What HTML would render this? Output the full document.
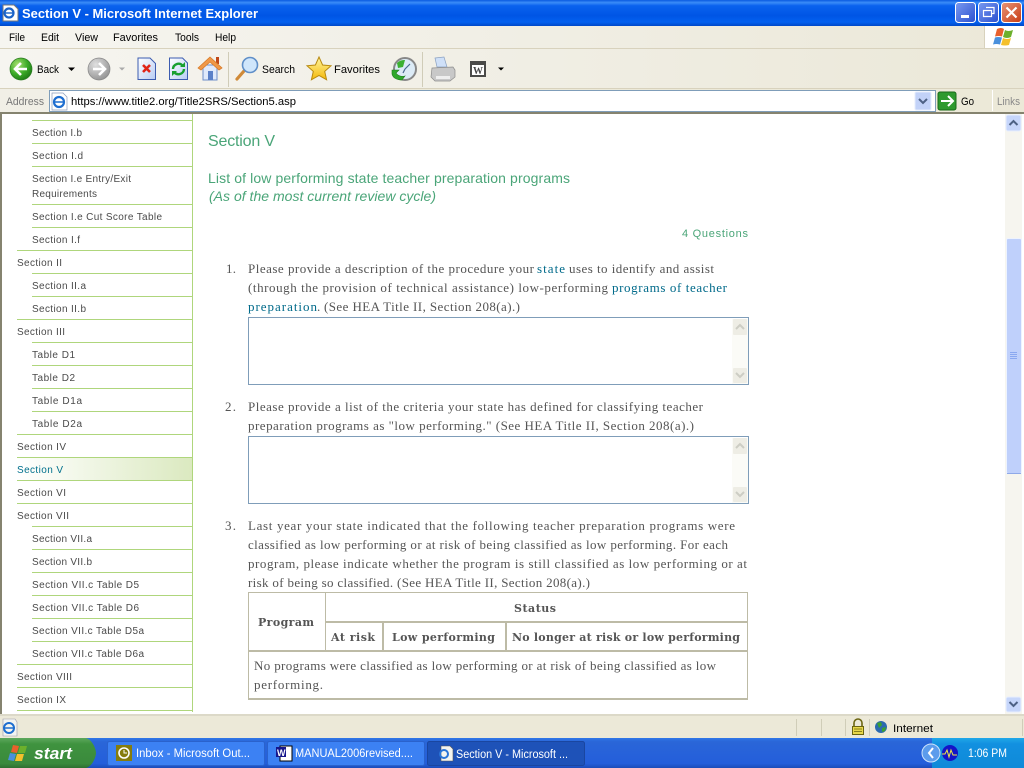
<!DOCTYPE html>
<html><head><meta charset="utf-8"><title>Section V - Microsoft Internet Explorer</title>
<style>
html,body{margin:0;padding:0;width:1024px;height:768px;overflow:hidden;background:#fff}
svg{position:absolute;left:0;top:0;display:block}
text{white-space:pre}
.c{font:11px "Liberation Sans",sans-serif;fill:#000}
.n{font:10px "Liberation Sans",sans-serif;fill:#4a4a4a}
.s{font:13px "Liberation Serif",serif;fill:#555}
.b{font:bold 11px "DejaVu Serif",serif;fill:#555}
.g{font-family:"Liberation Sans",sans-serif;fill:#4aa578}
.w{font:11.5px "Liberation Sans",sans-serif;fill:#fff}
</style></head><body>
<svg width="1024" height="768" viewBox="0 0 1024 768" xmlns="http://www.w3.org/2000/svg">
<defs>
<linearGradient id="tb" x1="0" y1="0" x2="0" y2="1"><stop offset="0" stop-color="#0a5be0"/><stop offset=".1" stop-color="#3a8cf8"/><stop offset=".22" stop-color="#0a62ee"/><stop offset=".6" stop-color="#0055e5"/><stop offset=".85" stop-color="#0360ef"/><stop offset="1" stop-color="#0048c8"/></linearGradient>
<linearGradient id="mb" x1="0" y1="0" x2="1" y2="0"><stop offset="0" stop-color="#f6f5f0"/><stop offset=".45" stop-color="#f1efe6"/><stop offset="1" stop-color="#ebe8d8"/></linearGradient>
<linearGradient id="tk" x1="0" y1="0" x2="0" y2="1"><stop offset="0" stop-color="#2f78e8"/><stop offset=".12" stop-color="#2a66d8"/><stop offset=".85" stop-color="#245edb"/><stop offset="1" stop-color="#1c4cb8"/></linearGradient>
<linearGradient id="st" x1="0" y1="0" x2="0" y2="1"><stop offset="0" stop-color="#5ea85e"/><stop offset=".2" stop-color="#3f933f"/><stop offset=".85" stop-color="#3a8a3c"/><stop offset="1" stop-color="#2e6f30"/></linearGradient>
<linearGradient id="tr" x1="0" y1="0" x2="0" y2="1"><stop offset="0" stop-color="#20a8e8"/><stop offset=".2" stop-color="#1290e0"/><stop offset="1" stop-color="#0f8ad8"/></linearGradient>
<linearGradient id="sel" x1="0" y1="0" x2="1" y2="0"><stop offset="0" stop-color="#fff"/><stop offset="1" stop-color="#dbe9c0"/></linearGradient>
<linearGradient id="bt" x1="0" y1="0" x2="1" y2="1"><stop offset="0" stop-color="#7a9af0"/><stop offset="1" stop-color="#2a50d0"/></linearGradient>
<linearGradient id="rd" x1="0" y1="0" x2="1" y2="1"><stop offset="0" stop-color="#e89478"/><stop offset="1" stop-color="#c83c14"/></linearGradient>
<radialGradient id="gr" cx=".35" cy=".3" r=".8"><stop offset="0" stop-color="#a8e070"/><stop offset=".55" stop-color="#3cab28"/><stop offset="1" stop-color="#1a7414"/></radialGradient>
<radialGradient id="gy" cx=".35" cy=".3" r=".8"><stop offset="0" stop-color="#e0e0e0"/><stop offset="1" stop-color="#8e8e8e"/></radialGradient>
<linearGradient id="pg" x1="0" y1="0" x2="1" y2="1"><stop offset="0" stop-color="#fff"/><stop offset="1" stop-color="#b8ccf4"/></linearGradient>
<linearGradient id="star" x1="0" y1="0" x2="0" y2="1"><stop offset="0" stop-color="#fff6a0"/><stop offset="1" stop-color="#f4b808"/></linearGradient>
</defs>

<!-- window chrome -->
<rect width="1024" height="26" fill="url(#tb)"/>
<rect y="26" width="1024" height="23" fill="url(#mb)"/>
<rect x="985" y="26" width="39" height="23" fill="#fff"/>
<rect x="984" y="26" width="1" height="23" fill="#d8d2bd"/>
<rect y="48" width="1024" height="1" fill="#d8d2bd"/>
<rect y="49" width="1024" height="39" fill="url(#mb)"/>
<rect y="88" width="1024" height="1" fill="#d8d2bd"/>
<rect y="89" width="1024" height="23" fill="#ece9d8"/>
<rect y="89" width="230" height="23" fill="#f1efe6"/>
<rect x="49.500" y="90.500" width="886" height="21" fill="#fff" stroke="#7f9db9"/>
<rect y="112" width="1024" height="2" fill="#85836f"/>
<rect y="114" width="1024" height="600" fill="#fff"/>
<rect x="0" y="114" width="2" height="600" fill="#85836f"/>
<rect y="714" width="1024" height="2" fill="#dcd9c8"/>
<rect y="716" width="1024" height="22" fill="#ece9d8"/>
<rect y="738" width="1024" height="30" fill="url(#tk)"/>

<!-- title bar -->
<path d="M3 5h11l4 4v12H3z" fill="#fff" stroke="#777"/>
<circle cx="9" cy="13" r="4.500" fill="none" stroke="#1b63c8" stroke-width="2.200"/>
<path d="M4 13h10" stroke="#1b63c8" stroke-width="1.400"/>
<text x="22" y="18" textLength="236" lengthAdjust="spacingAndGlyphs" style="font:bold 13px 'Liberation Sans',sans-serif;fill:#fff">Section V - Microsoft Internet Explorer</text>
<rect x="955.500" y="2.500" width="20" height="20" rx="3" fill="url(#bt)" stroke="#fff"/>
<rect x="961" y="15" width="8" height="3" fill="#fff"/>
<rect x="978.500" y="2.500" width="20" height="20" rx="3" fill="url(#bt)" stroke="#fff"/>
<path d="M986 7.500h8v6h-2M983.500 10.500h8v6h-8z" fill="none" stroke="#fff" stroke-width="1.200"/>
<rect x="1001.500" y="2.500" width="20" height="20" rx="3" fill="url(#rd)" stroke="#fff"/>
<path d="M1006.500 7.500l10 10M1016.500 7.500l-10 10" stroke="#fff" stroke-width="2.200"/>

<!-- menu -->
<text class="c" x="9" y="41" textLength="16" lengthAdjust="spacingAndGlyphs">File</text>
<text class="c" x="41" y="41" textLength="18" lengthAdjust="spacingAndGlyphs">Edit</text>
<text class="c" x="75" y="41" textLength="23" lengthAdjust="spacingAndGlyphs">View</text>
<text class="c" x="113" y="41" textLength="45" lengthAdjust="spacingAndGlyphs">Favorites</text>
<text class="c" x="175" y="41" textLength="24" lengthAdjust="spacingAndGlyphs">Tools</text>
<text class="c" x="215" y="41" textLength="21" lengthAdjust="spacingAndGlyphs">Help</text>
<!-- windows flag -->
<path d="M997 29q4-2 7 0l-2 7.500q-3-1-7 0z" fill="#e8602c"/>
<path d="M1005 30q3 2 8 0l-2 7q-4 2-8 0z" fill="#6cb02c"/>
<path d="M995 37.500q3-1 7 0l-2 7q-4-1-7 0z" fill="#4a90dc"/>
<path d="M1003 38q4 2 8 0l-2 7q-4 1-8 0z" fill="#f4c02c"/>

<!-- toolbar -->
<circle cx="21" cy="69" r="11" fill="url(#gr)" stroke="#2a7a20" stroke-width=".7"/>
<path d="M27 69H16M21 63l-6 6 6 6" fill="none" stroke="#fff" stroke-width="2.600"/>
<text class="c" x="37" y="73" textLength="22" lengthAdjust="spacingAndGlyphs">Back</text>
<path d="M68 67.500h7l-3.500 3.500z" fill="#000"/>
<circle cx="99" cy="69" r="11" fill="url(#gy)" stroke="#888" stroke-width=".7"/>
<path d="M93 69h11M99 63l6 6-6 6" fill="none" stroke="#fff" stroke-width="2.600"/>
<path d="M119 67.500h6l-3 3z" fill="#aaa"/>
<path d="M138 58h12l5.500 5.500V79.500H138z" fill="url(#pg)" stroke="#3c5cb0"/>
<path d="M143 65l7 7M150 65l-7 7" stroke="#e02418" stroke-width="2.600"/>
<path d="M169.500 58h13l5 5V79.500h-18z" fill="url(#pg)" stroke="#3c5cb0"/>
<path d="M173 69a5.500 5.500 0 0 1 9.500-3.500M184 69a5.500 5.500 0 0 1-9.500 3.500" fill="none" stroke="#18a030" stroke-width="2.400"/>
<path d="M180 67h5v-5zM177 71h-5v5z" fill="#18a030"/>
<rect x="203" y="65" width="14" height="15" fill="#dfe9fb" stroke="#6e8ec8"/>
<rect x="208" y="71" width="5" height="9" fill="#5a80c8"/>
<rect x="216" y="57" width="3" height="7" fill="#c04818"/>
<path d="M198 68l12-11 12 11-3 2-9-8-9 8z" fill="#f09848" stroke="#d87a28" stroke-width=".8"/>
<rect x="228" y="52" width="1" height="35" fill="#d0ccb8"/>
<path d="M237 79l7-8" stroke="#d08a38" stroke-width="3.200" stroke-linecap="round"/>
<circle cx="250" cy="65" r="7.500" fill="#cfe6fb" stroke="#5f8fc8" stroke-width="1.600"/>
<text class="c" x="262" y="73" textLength="33" lengthAdjust="spacingAndGlyphs">Search</text>
<path d="M319 57l3.600 8 8.400.8-6.300 5.600 1.900 8.400-7.600-4.400-7.600 4.400 1.900-8.400-6.300-5.600 8.400-.8z" fill="url(#star)" stroke="#b88a10"/>
<text class="c" x="334" y="73" textLength="46" lengthAdjust="spacingAndGlyphs">Favorites</text>
<circle cx="405" cy="69" r="11" fill="#dcebf6" stroke="#888" stroke-width="2"/>
<path d="M405 69l5-5M405 69l-2 4" stroke="#4a6a90" stroke-width="1.200"/>
<path d="M392 70h7l-3 3c2 3 6 4 9 3l-3 4c-5 0-9-2-10-6z" fill="#2ea82a" stroke="#1c7c1c" stroke-width=".6"/>
<path d="M397 63a10 10 0 0 1 8-3l-2 7-5 1z" fill="#3cb030"/>
<rect x="422" y="52" width="1" height="35" fill="#d0ccb8"/>
<path d="M435 58l9-1 3 10h-10z" fill="#cfe0f8" stroke="#8aa0c0" stroke-width=".7"/>
<path d="M432 68l21-1 2 3v7l-5 4h-15l-4-4z" fill="#c8c8c8" stroke="#8c8c8c" stroke-width=".7"/>
<rect x="436" y="76" width="14" height="3" fill="#eee"/>
<rect x="470" y="61" width="16" height="16" fill="#4a4a48"/>
<rect x="472" y="65" width="12" height="10" fill="#fff"/>
<text x="473" y="74" textLength="10" style="font:bold 10px 'Liberation Serif',serif;fill:#444">W</text>
<path d="M498 67.500h6l-3 3z" fill="#000"/>

<!-- address bar -->
<text class="c" x="6" y="105" textLength="38" lengthAdjust="spacingAndGlyphs" style="fill:#777">Address</text>
<path d="M52 93h11l4 4v13H52z" fill="#fff" stroke="#8a9ab8" stroke-width=".7"/>
<circle cx="59" cy="102" r="5" fill="none" stroke="#1e6ed0" stroke-width="2.200"/>
<path d="M54 102h10" stroke="#1e6ed0" stroke-width="1.500"/>
<text class="c" x="71" y="105" textLength="225" lengthAdjust="spacingAndGlyphs">https://www.title2.org/Title2SRS/Section5.asp</text>
<rect x="915" y="92" width="16" height="18" rx="1.500" fill="#c2d2f8" stroke="#e4ecfc"/>
<path d="M919 99l4 4 4-4" fill="none" stroke="#4d6185" stroke-width="2"/>
<rect x="938" y="92" width="18" height="18" rx="2" fill="#2e9a2e" stroke="#1a6a1a"/>
<path d="M941 101h11M948 96l5 5-5 5" fill="none" stroke="#fff" stroke-width="2"/>
<text class="c" x="961" y="105" textLength="13" lengthAdjust="spacingAndGlyphs">Go</text>
<rect x="992" y="90" width="1" height="21" fill="#fff"/>
<text class="c" x="997" y="105" textLength="23" lengthAdjust="spacingAndGlyphs" style="fill:#888">Links</text>

<!-- sidebar lines -->
<g fill="#afd67c">
<rect x="32" y="120" width="160" height="1"/><rect x="32" y="143" width="160" height="1"/><rect x="32" y="166" width="160" height="1"/><rect x="32" y="204" width="160" height="1"/><rect x="32" y="227" width="160" height="1"/>
<rect x="17" y="250" width="175" height="1"/><rect x="32" y="273" width="160" height="1"/><rect x="32" y="296" width="160" height="1"/><rect x="17" y="319" width="175" height="1"/><rect x="32" y="342" width="160" height="1"/><rect x="32" y="365" width="160" height="1"/><rect x="32" y="388" width="160" height="1"/><rect x="32" y="411" width="160" height="1"/>
<rect x="17" y="434" width="175" height="1"/><rect x="17" y="457" width="175" height="1"/>
</g>
<rect x="17" y="458" width="175" height="22" fill="url(#sel)"/>
<g fill="#afd67c">
<rect x="17" y="480" width="175" height="1"/><rect x="17" y="503" width="175" height="1"/><rect x="32" y="526" width="160" height="1"/><rect x="32" y="549" width="160" height="1"/><rect x="32" y="572" width="160" height="1"/><rect x="32" y="595" width="160" height="1"/><rect x="32" y="618" width="160" height="1"/><rect x="32" y="641" width="160" height="1"/><rect x="17" y="664" width="175" height="1"/><rect x="17" y="687" width="175" height="1"/><rect x="17" y="710" width="175" height="1"/>
<rect x="192" y="114" width="1" height="598"/>
</g>

<!-- sidebar text -->
<text class="n" x="32" y="136" textLength="50">Section I.b</text>
<text class="n" x="32" y="159" textLength="51">Section I.d</text>
<text class="n" x="32" y="182" textLength="99">Section I.e Entry/Exit</text>
<text class="n" x="32" y="197" textLength="65">Requirements</text>
<text class="n" x="32" y="220" textLength="130">Section I.e Cut Score Table</text>
<text class="n" x="32" y="243" textLength="48">Section I.f</text>
<text class="n" x="17" y="266" textLength="45">Section II</text>
<text class="n" x="32" y="289" textLength="54">Section II.a</text>
<text class="n" x="32" y="312" textLength="54">Section II.b</text>
<text class="n" x="17" y="335" textLength="48">Section III</text>
<text class="n" x="32" y="358" textLength="43">Table D1</text>
<text class="n" x="32" y="381" textLength="43">Table D2</text>
<text class="n" x="32" y="404" textLength="50">Table D1a</text>
<text class="n" x="32" y="427" textLength="50">Table D2a</text>
<text class="n" x="17" y="450" textLength="49">Section IV</text>
<text class="n" x="17" y="473" textLength="46" style="fill:#00708c">Section V</text>
<text class="n" x="17" y="496" textLength="49">Section VI</text>
<text class="n" x="17" y="519" textLength="52">Section VII</text>
<text class="n" x="32" y="542" textLength="60">Section VII.a</text>
<text class="n" x="32" y="565" textLength="60">Section VII.b</text>
<text class="n" x="32" y="588" textLength="107">Section VII.c Table D5</text>
<text class="n" x="32" y="611" textLength="107">Section VII.c Table D6</text>
<text class="n" x="32" y="634" textLength="112">Section VII.c Table D5a</text>
<text class="n" x="32" y="657" textLength="112">Section VII.c Table D6a</text>
<text class="n" x="17" y="680" textLength="55">Section VIII</text>
<text class="n" x="17" y="703" textLength="49">Section IX</text>

<!-- main headings -->
<text class="g" x="208" y="146" textLength="67" style="font-size:16px">Section V</text>
<text class="g" x="208" y="183" textLength="362" style="font-size:14px">List of low performing state teacher preparation programs</text>
<text class="g" x="209" y="201" textLength="227" style="font-size:14px;font-style:italic">(As of the most current review cycle)</text>
<text class="g" x="682" y="237" textLength="66" style="font-size:11px">4 Questions</text>

<!-- question 1 -->
<text class="s" x="226" y="273" textLength="10">1.</text>
<text class="s" x="248" y="273" textLength="286">Please provide a description of the procedure your</text>
<text class="s" x="537" y="273" textLength="28" style="fill:#006a8a">state</text>
<text class="s" x="569" y="273" textLength="145">uses to identify and assist</text>
<text class="s" x="248" y="292" textLength="360">(through the provision of technical assistance) low-performing</text>
<text class="s" x="612" y="292" textLength="115" style="fill:#006a8a">programs of teacher</text>
<text class="s" x="248" y="311" textLength="69" style="fill:#006a8a">preparation</text>
<text class="s" x="317" y="311" textLength="3">.</text>
<text class="s" x="324" y="311" textLength="196">(See HEA Title II, Section 208(a).)</text>

<!-- textarea 1 -->
<rect x="248.500" y="317.500" width="500" height="67" fill="#fff" stroke="#7f9db9"/>
<rect x="732" y="319" width="16" height="65" fill="#fbfbf7"/>
<rect x="733" y="319" width="14" height="16" rx="1" fill="#eeede5"/>
<rect x="733" y="368" width="14" height="15" rx="1" fill="#eeede5"/>
<path d="M736 329l4-4 4 4M736 373l4 4 4-4" fill="none" stroke="#cdcdc4" stroke-width="2"/>

<!-- question 2 -->
<text class="s" x="225" y="411" textLength="11">2.</text>
<text class="s" x="248" y="411" textLength="455">Please provide a list of the criteria your state has defined for classifying teacher</text>
<text class="s" x="248" y="430" textLength="446">preparation programs as "low performing." (See HEA Title II, Section 208(a).)</text>

<!-- textarea 2 -->
<rect x="248.500" y="436.500" width="500" height="67" fill="#fff" stroke="#7f9db9"/>
<rect x="732" y="438" width="16" height="65" fill="#fbfbf7"/>
<rect x="733" y="438" width="14" height="16" rx="1" fill="#eeede5"/>
<rect x="733" y="487" width="14" height="15" rx="1" fill="#eeede5"/>
<path d="M736 448l4-4 4 4M736 492l4 4 4-4" fill="none" stroke="#cdcdc4" stroke-width="2"/>

<!-- question 3 -->
<text class="s" x="225" y="530" textLength="11">3.</text>
<text class="s" x="248" y="530" textLength="487">Last year your state indicated that the following teacher preparation programs were</text>
<text class="s" x="248" y="549" textLength="480">classified as low performing or at risk of being classified as low performing. For each</text>
<text class="s" x="248" y="568" textLength="499">program, please indicate whether the program is still classified as low performing or at</text>
<text class="s" x="248" y="587" textLength="342">risk of being so classified. (See HEA Title II, Section 208(a).)</text>

<!-- table -->
<rect x="248.500" y="592.500" width="499" height="107" fill="#fff" stroke="#bdbba6"/>
<g fill="#bdbba6">
<rect x="325" y="593" width="1" height="58"/>
<rect x="325" y="621" width="422" height="2"/>
<rect x="382" y="622" width="2" height="29"/>
<rect x="505" y="622" width="2" height="29"/>
<rect x="249" y="650" width="498" height="2"/>
<rect x="249" y="698" width="499" height="2"/>
</g>
<text class="b" x="514" y="612" textLength="42">Status</text>
<text class="b" x="258" y="626" textLength="56">Program</text>
<text class="b" x="331" y="641" textLength="44">At risk</text>
<text class="b" x="392" y="641" textLength="103">Low performing</text>
<text class="b" x="512" y="641" textLength="228">No longer at risk or low performing</text>
<text class="s" x="254" y="670" textLength="462">No programs were classified as low performing or at risk of being classified as low</text>
<text class="s" x="254" y="689" textLength="69">performing.</text>

<!-- page scrollbar -->
<rect x="1005" y="114" width="17" height="600" fill="#f6f5ef"/>
<rect x="1006" y="115" width="15" height="16" rx="2" fill="#c6d6fb" stroke="#e8effd"/>
<path d="M1009.500 125l4-4 4 4" fill="none" stroke="#4d6185" stroke-width="2"/>
<rect x="1006.500" y="238.500" width="15" height="235" rx="1.500" fill="#bfd0fb" stroke="#eef3fe"/>
<path d="M1007 473.500h14" stroke="#8fa9e8"/>
<path d="M1010 352.500h7M1010 354.500h7M1010 356.500h7M1010 358.500h7" stroke="#8aa8f0"/>
<rect x="1006" y="697" width="15" height="15" rx="2" fill="#c6d6fb" stroke="#e8effd"/>
<path d="M1009.500 702l4 4 4-4" fill="none" stroke="#4d6185" stroke-width="2"/>

<!-- status bar -->
<path d="M3 719h12l2 3v14H3z" fill="#f4f4f0" stroke="#99a" stroke-width=".6"/>
<circle cx="9" cy="728" r="5" fill="none" stroke="#1e6ed0" stroke-width="2"/>
<path d="M4 728h10" stroke="#1e6ed0" stroke-width="1.500"/>
<g fill="#d0cdb8"><rect x="796" y="719" width="1" height="17"/><rect x="821" y="719" width="1" height="17"/><rect x="845" y="719" width="1" height="17"/><rect x="869" y="719" width="1" height="17"/><rect x="1022" y="719" width="1" height="17"/></g>
<path d="M854 727v-4a4 4 0 0 1 8 0v4" fill="none" stroke="#6a6410" stroke-width="1.600"/>
<rect x="852.500" y="726.500" width="11" height="8" fill="#e8d84a" stroke="#6a6410"/>
<path d="M854 729h8M854 731.500h8" stroke="#6a6410" stroke-width=".8"/>
<circle cx="881" cy="727" r="6" fill="#2c6ab0"/>
<path d="M877 723l4-1 1 3-3 3zM882 728l4-1-1 4-3 1z" fill="#3aa030"/>
<text class="c" x="893" y="732" textLength="40" lengthAdjust="spacingAndGlyphs">Internet</text>

<!-- taskbar -->
<path d="M0 738H86c7 2 10 12 10 15s-3 13-10 15H0z" fill="url(#st)"/>
<path d="M13 745l6 1-2 7-6-1z" fill="#e8602c"/><path d="M20 746l7 0-2 7-7 0z" fill="#6cb02c"/><path d="M10 753l6 1-2 7-6-1z" fill="#4a90dc"/><path d="M17 754l7 0-2 7-7 0z" fill="#f4c02c"/>
<text x="34" y="759" textLength="38" lengthAdjust="spacingAndGlyphs" style="font:italic bold 17px 'Liberation Sans',sans-serif;fill:#fff">start</text>

<rect x="107.500" y="741.500" width="157" height="24" rx="2" fill="#3c81f3" stroke="#2a62cc"/>
<rect x="116" y="745" width="16" height="16" fill="#857c0e"/>
<circle cx="124" cy="753" r="5" fill="none" stroke="#fff" stroke-width="1.600"/>
<path d="M124 750v3h3" fill="none" stroke="#fff"/>
<text class="w" x="136" y="757" textLength="114" lengthAdjust="spacingAndGlyphs">Inbox - Microsoft Out...</text>

<rect x="267.500" y="741.500" width="157" height="24" rx="2" fill="#3c81f3" stroke="#2a62cc"/>
<rect x="280" y="746" width="12" height="15" fill="#fff" stroke="#000"/>
<rect x="276" y="747" width="10" height="10" fill="#16168c"/>
<text x="277" y="756" textLength="8" style="font:bold 9px 'Liberation Sans',sans-serif;fill:#fff">W</text>
<text class="w" x="295" y="757" textLength="118" lengthAdjust="spacingAndGlyphs">MANUAL2006revised....</text>

<rect x="427.500" y="741.500" width="157" height="24" rx="2" fill="#1e52b8" stroke="#1a46a0"/>
<path d="M441 746h9l3 3v12h-12z" fill="#f4f4f0" stroke="#555" stroke-width=".6"/>
<circle cx="444" cy="754" r="4" fill="none" stroke="#2a74d8" stroke-width="2"/>
<text class="w" x="456" y="758" textLength="112" lengthAdjust="spacingAndGlyphs">Section V - Microsoft ...</text>

<rect x="932" y="738" width="92" height="30" fill="url(#tr)"/>
<circle cx="931" cy="753" r="9" fill="#5c9cec" stroke="#cfe4fb"/>
<path d="M933 748l-4 5 4 5" fill="none" stroke="#fff" stroke-width="2"/>
<circle cx="950" cy="753" r="8" fill="#1414c8"/>
<path d="M942 754h3l2-4 2 7 2-7 2 5h4" fill="none" stroke="#f0e848" stroke-width="1"/>
<text class="w" x="968" y="757" textLength="39" lengthAdjust="spacingAndGlyphs">1:06 PM</text>
</svg>
</body></html>
